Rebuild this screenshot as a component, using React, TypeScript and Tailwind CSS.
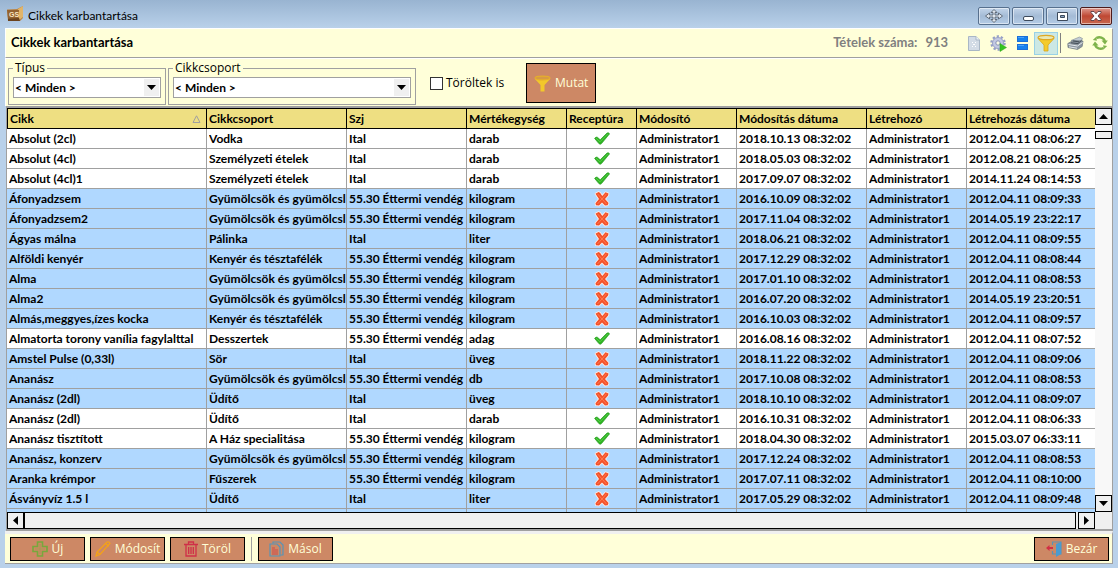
import { useState } from 'react';
import type { ReactNode } from 'react';

interface Item {
  name: string;
  group: string;
  szj: string;
  unit: string;
  recipe: boolean;
  modified: string;
  created: string;
}

const CATERING = '55.30 Éttermi vendég';
const FRUITS = 'Gyümölcsök és gyümölcsl';

const item = (name: string, group: string, szj: string, unit: string, recipe: boolean, modified: string, created: string): Item => ({
  name,
  group,
  szj,
  unit,
  recipe,
  modified: `${modified} 08:32:02`,
  created,
});

const ITEMS: Item[] = [
  item('Absolut (2cl)', 'Vodka', 'Ital', 'darab', true, '2018.10.13', '2012.04.11 08:06:27'),
  item('Absolut (4cl)', 'Személyzeti ételek', 'Ital', 'darab', true, '2018.05.03', '2012.08.21 08:06:25'),
  item('Absolut (4cl)1', 'Személyzeti ételek', 'Ital', 'darab', true, '2017.09.07', '2014.11.24 08:14:53'),
  item('Áfonyadzsem', FRUITS, CATERING, 'kilogram', false, '2016.10.09', '2012.04.11 08:09:33'),
  item('Áfonyadzsem2', FRUITS, CATERING, 'kilogram', false, '2017.11.04', '2014.05.19 23:22:17'),
  item('Ágyas málna', 'Pálinka', 'Ital', 'liter', false, '2018.06.21', '2012.04.11 08:09:55'),
  item('Alföldi kenyér', 'Kenyér és tésztafélék', CATERING, 'kilogram', false, '2017.12.29', '2012.04.11 08:08:44'),
  item('Alma', FRUITS, CATERING, 'kilogram', false, '2017.01.10', '2012.04.11 08:08:53'),
  item('Alma2', FRUITS, CATERING, 'kilogram', false, '2016.07.20', '2014.05.19 23:20:51'),
  item('Almás,meggyes,ízes kocka', 'Kenyér és tésztafélék', CATERING, 'kilogram', false, '2016.10.03', '2012.04.11 08:09:57'),
  item('Almatorta torony vanília fagylalttal', 'Desszertek', CATERING, 'adag', true, '2016.08.16', '2012.04.11 08:07:52'),
  item('Amstel Pulse (0,33l)', 'Sör', 'Ital', 'üveg', false, '2018.11.22', '2012.04.11 08:09:06'),
  item('Ananász', FRUITS, CATERING, 'db', false, '2017.10.08', '2012.04.11 08:08:53'),
  item('Ananász (2dl)', 'Üdítő', 'Ital', 'üveg', false, '2018.10.10', '2012.04.11 08:09:07'),
  item('Ananász (2dl)', 'Üdítő', 'Ital', 'darab', true, '2016.10.31', '2012.04.11 08:06:33'),
  item('Ananász tisztított', 'A Ház specialitása', CATERING, 'kilogram', true, '2018.04.30', '2015.03.07 06:33:11'),
  item('Ananász, konzerv', FRUITS, CATERING, 'kilogram', false, '2017.12.24', '2012.04.11 08:08:53'),
  item('Aranka krémpor', 'Fűszerek', CATERING, 'kilogram', false, '2017.07.11', '2012.04.11 08:10:00'),
  item('Ásványvíz 1.5 l', 'Üdítő', 'Ital', 'liter', false, '2017.05.29', '2012.04.11 08:09:48'),
];

const COLUMNS = [
  { label: 'Cikk', width: 'w-[200px]' },
  { label: 'Cikkcsoport', width: 'w-[140px]' },
  { label: 'Szj', width: 'w-[120px]' },
  { label: 'Mértékegység', width: 'w-[100px]' },
  { label: 'Receptúra', width: 'w-[70px]' },
  { label: 'Módosító', width: 'w-[100px]' },
  { label: 'Módosítás dátuma', width: 'w-[130px]' },
  { label: 'Létrehozó', width: 'w-[100px]' },
  { label: 'Létrehozás dátuma', width: '' },
];

function LogoIcon() {
  return (
    <svg width="16" height="16" viewBox="0 0 16 16">
      <path d="M0 3.500l10-.5 6-3v12l-3 3H1z" fill="#b98546" />
      <path d="M11 3l5-3v11l-4 3z" fill="#e0b46a" />
      <path d="M0 4h12l-.5 8L1 12.500z" fill="#94622f" />
      <path d="M1 12.500l11-.5 1 3H1z" fill="#6b431d" />
      <text x="2" y="10.500" fontSize="7" fontWeight="700" fontFamily="Liberation Sans, sans-serif" fill="#f8e6c2">GS</text>
    </svg>
  );
}

function FunnelIcon({ size = 18 }: { size?: number }) {
  return (
    <svg width={size} height={size} viewBox="0 0 18 18">
      <path d="M1 4.500L7 11v6h4v-6l6-6.500z" fill="#f4cb2b" stroke="#dba61a" strokeWidth=".8" />
      <ellipse cx="9" cy="3.500" rx="8" ry="2.200" fill="#e9e9b4" stroke="#dfa921" strokeWidth="1.200" />
    </svg>
  );
}

function SolidFunnelIcon() {
  return (
    <svg width="17" height="17" viewBox="0 0 17 17">
      <path d="M.5 3.500L6.500 10v6.500h4V10l6-6.500z" fill="#f2c82b" />
      <ellipse cx="8.500" cy="3" rx="7.500" ry="1.900" fill="#d79a45" stroke="#e5ae2b" strokeWidth="1.100" />
    </svg>
  );
}

function DocumentIcon() {
  return (
    <svg width="12" height="15" viewBox="0 0 12 15">
      <path d="M.5.500H8L11.500 4v10.500H.5z" fill="#d3dce6" stroke="#a9b7c6" />
      <path d="M8 .5V4h3.500" fill="#eef3f8" stroke="#a9b7c6" />
      <path d="M4 6h1v1H4zM7 6h1v1H7zM5 8h2v1H5zM4 10h1v1H4zM7 10h1v1H7z" fill="#fff" />
    </svg>
  );
}

function GearIcon() {
  return (
    <svg width="17" height="17" viewBox="0 0 17 17">
      <circle cx="8" cy="8" r="6.500" fill="none" stroke="#969fc6" strokeWidth="2.500" strokeDasharray="2.200 1.880" />
      <circle cx="8" cy="8" r="5.500" fill="#c3c9e3" stroke="#9aa2c8" />
      <circle cx="8" cy="8" r="2.200" fill="#f9fae4" stroke="#8790b8" />
      <path d="M10 8.500l6.500 4-6.500 4z" fill="#35c41f" stroke="#2aa317" strokeWidth=".5" />
    </svg>
  );
}

function PanesIcon() {
  return (
    <svg width="11" height="14" viewBox="0 0 11 14">
      <rect x=".5" y=".5" width="10" height="5" fill="#1682ee" stroke="#1b6fd6" />
      <rect x=".5" y="8.500" width="10" height="5" fill="#1682ee" stroke="#1b6fd6" />
      <path d="M1 1.500h6M1 9.500h6" stroke="#4ba4fa" />
    </svg>
  );
}

function PrinterIcon() {
  return (
    <svg width="17" height="15" viewBox="0 0 17 15">
      <path d="M4 4.500L12.500 1l3 1.500-2 4z" fill="#c3ccd3" stroke="#8b959e" strokeWidth=".7" />
      <path d="M.8 7.500L6 4.500l10 .5-.8 5.500-4.700 3L1 11.500z" fill="#8b959e" stroke="#6c7780" strokeWidth=".7" />
      <path d="M1.500 8.500l9 1.500 5-3.500" stroke="#e4e9ec" fill="none" />
      <path d="M2 10.800l8 1.400" stroke="#e4e9ec" fill="none" />
      <path d="M4 6.800l7 .8 3.500-3.300M6 5l6 .8" stroke="#454f58" fill="none" />
    </svg>
  );
}

function RefreshIcon() {
  return (
    <svg width="16" height="16" viewBox="0 0 16 16">
      <g fill="none" stroke="#7fb34b" strokeWidth="2.400">
        <path d="M4.500 3A6 6 0 0 1 13 6" />
        <path d="M11.500 13A6 6 0 0 1 3 10" />
      </g>
      <path d="M9.500 5.500h6.300L13 9.500zM6.500 10.500H.2L3 6.500z" fill="#7fb34b" />
      <path d="M4.500 1.500L.8 5l4 .8zM11.500 14.500l3.700-3.500-4-.8z" fill="#7fb34b" />
    </svg>
  );
}

function CheckIcon() {
  return (
    <svg width="16" height="13" viewBox="0 0 16 13" className="mx-auto" role="img" aria-label="igen">
      <path d="M.6 6.400q1.600-2 3-1l2.600 2.400L13 1q1.800-.6 2.600.8L7.500 11.600q-1.300 1.300-2.600 0z" fill="#2fb524" stroke="#2a9d22" strokeWidth=".7" strokeLinejoin="round" />
      <path d="M2 6.200l4 3.600 8-8" fill="none" stroke="#5fd150" strokeWidth=".8" />
    </svg>
  );
}

function CrossIcon() {
  return (
    <svg width="16" height="16" viewBox="0 0 16 16" className="mx-auto" role="img" aria-label="nem">
      <path
        d="M1.500 2.800L4.500 1l1.500.8L8.300 5l3.200-3.800 3 1.300-.4 2L11 8l3.500 4-.8 2.200-2.700.4L8 11.500l-3 3-3-.2-.5-2L5 8z"
        fill="#f4512a"
        stroke="#fbeee8"
        strokeWidth="1.600"
        strokeLinejoin="round"
        paintOrder="stroke"
      />
      <path d="M3.500 2.800l4.700 5.400 4.300 4.800M12.500 2.800L8 8l-4.500 5" stroke="#ff7b52" fill="none" />
    </svg>
  );
}

function PlusIcon() {
  return (
    <svg width="16" height="16" viewBox="0 0 16 16">
      <path d="M5.500 1h5v4.500H15v5h-4.500V15h-5v-4.500H1v-5h4.500z" fill="#cd8865" stroke="#77a83c" strokeWidth="1.600" />
      <path d="M8 3v10M3 8h10" stroke="#a99a52" strokeWidth="1.200" />
    </svg>
  );
}

function PencilIcon() {
  return (
    <svg width="16" height="16" viewBox="0 0 16 16" fill="none" stroke="#f5a316" strokeWidth="1.200">
      <path d="M1 15l1-4L12 1q2-.8 3 1.500L5 13.500z" />
      <path d="M2 11l3 2.500M10.500 2.500l3.200 2.800" />
    </svg>
  );
}

function TrashIcon() {
  return (
    <svg width="14" height="16" viewBox="0 0 14 16" fill="none" stroke="#cf2f48" strokeWidth="1.300">
      <path d="M0 3.500h14M4.500 3V1h5v2M2 4v11h10V4M4.700 6v7M7 6v7M9.300 6v7" />
    </svg>
  );
}

function CopyIcon() {
  return (
    <svg width="15" height="16" viewBox="0 0 15 16" fill="none" stroke="#5794b8" strokeWidth="1.200">
      <path d="M4 2.500V1h7l3 3v10h-2.500" />
      <path d="M1 3h7l3 3v9H1z" />
      <path d="M3 7h3M3 9h6M3 11h6M3 13h6" stroke="#cf4a4a" />
    </svg>
  );
}

function ExitIcon() {
  return (
    <svg width="16" height="16" viewBox="0 0 16 16">
      <path d="M6.500 4V1H15v12h-4M6.500 10v3H10" fill="none" stroke="#5b93b4" strokeWidth="1.200" />
      <path d="M10 3l5-2v12l-5 3z" fill="#4a9bd0" />
      <path d="M0 7l3.500-3v2H7v2H3.500v2z" fill="#d22f45" />
    </svg>
  );
}

interface WindowButtonProps {
  label: string;
  children: ReactNode;
  close?: boolean;
}

function WindowButton({ label, children, close = false }: WindowButtonProps) {
  const tone = close
    ? 'border-[#4d1b1b] bg-linear-to-b from-[#dd9a90] via-[#bf4733] to-[#c8684f]'
    : 'border-[#57708e] bg-linear-to-b from-[#c3d5ea] via-[#a4bbd6] to-[#b4cce6]';
  return (
    <button type="button" aria-label={label} className={`flex h-[18px] w-8 items-center justify-center rounded-xs border inset-ring inset-ring-white/50 ${tone}`}>
      {children}
    </button>
  );
}

interface ActionButtonProps {
  icon: ReactNode;
  children: ReactNode;
  className?: string;
}

function ActionButton({ icon, children, className = 'h-6 w-[75px]' }: ActionButtonProps) {
  return (
    <button type="button" className={`flex items-center justify-center gap-1 border border-black bg-[#cd8865] font-['Open_Sans',sans-serif] text-[12px] text-[#ffffd8] ${className}`}>
      {icon}
      {children}
    </button>
  );
}

function FilterSelect({ label, id, className }: { label: string; id: string; className: string }) {
  return (
    <fieldset className={`h-[43px] border border-[#a0a0a0] px-1 ${className}`}>
      <legend className="px-0.5 font-['Open_Sans',sans-serif] text-[12px] leading-3">
        <label htmlFor={id}>{label}</label>
      </legend>
      <div className="relative mt-[3px]">
        <select id={id} className="h-[21px] w-full appearance-none border border-[#a0a0a0] bg-white px-px text-[12px] leading-4 font-bold">
          <option>&lt; Minden &gt;</option>
        </select>
        <span className="pointer-events-none absolute inset-y-0.5 right-0.5 flex w-[15px] items-center justify-center bg-[#f0f0f0]">
          <svg width="9" height="5" viewBox="0 0 9 5"><path d="M0 0h9L4.500 5z" /></svg>
        </span>
      </div>
    </fieldset>
  );
}

function ScrollButton({ label, path }: { label: string; path: string }) {
  return (
    <button type="button" aria-label={label} className="flex size-[17px] shrink-0 items-center justify-center border border-black bg-[#f0f0f0]">
      <svg width="9" height="9" viewBox="0 0 9 9"><path d={path} /></svg>
    </button>
  );
}

function Row({ data }: { data: Item }) {
  const texts = [data.name, data.group, data.szj, data.unit];
  const cell = 'h-5 border-r border-b border-[#a0a0a0] p-0';
  const text = 'ml-0.5 overflow-hidden leading-[19px] whitespace-nowrap';
  return (
    <tr className={data.recipe ? 'bg-white' : 'bg-[#b0d8ff]'}>
      {texts.map((value, i) => (
        <td key={i} className={cell}><div className={text}>{value}</div></td>
      ))}
      <td className={cell}>{data.recipe ? <CheckIcon /> : <CrossIcon />}</td>
      <td className={cell}><div className={text}>Administrator1</div></td>
      <td className={cell}><div className={text}>{data.modified}</div></td>
      <td className={cell}><div className={text}>Administrator1</div></td>
      <td className="h-5 border-b border-[#a0a0a0] p-0"><div className={text}>{data.created}</div></td>
    </tr>
  );
}

export default function App() {
  const [showDeleted, setShowDeleted] = useState(false);

  return (
    <div className="flex h-screen flex-col overflow-hidden bg-[#b9d1ea] px-[5px] pb-1 font-['Lato',sans-serif] text-[12px] text-black">
      <header className="-mx-[5px] flex h-7 shrink-0 items-center gap-[5px] bg-linear-to-b from-[#99b4d1] to-[#b9d1ea] pr-1.5 pl-[7px]">
        <LogoIcon />
        <span className="mt-1 flex-1">Cikkek karbantartása</span>
        <div className="mt-1 flex gap-0.5">
          <WindowButton label="Mozgatás">
            <svg width="18" height="14" viewBox="0 0 18 14">
              <path d="M9 .5l3 3h-2v2.500h3.500V4l4 3-4 3V8H10v2.500h2l-3 3-3-3h2V8H4.500v2l-4-3 4-3v2H8V3.500H6z" fill="#dfe6ee" stroke="#5a6472" strokeWidth=".9" />
            </svg>
          </WindowButton>
          <WindowButton label="Kis méret">
            <span className="mt-1 h-[5px] w-[11px] rounded-xs border border-[#3d4a5c] bg-white" />
          </WindowButton>
          <WindowButton label="Teljes méret">
            <svg width="11" height="9" viewBox="0 0 11 9">
              <path d="M.5.500h10v8H.5z" fill="#fff" stroke="#3d4a5c" />
              <path d="M3.500 3.500h4v2h-4z" fill="#8ba4c2" stroke="#3d4a5c" />
            </svg>
          </WindowButton>
          <WindowButton label="Bezárás" close>
            <svg width="12" height="10" viewBox="0 0 12 10">
              <path d="M1 .5h3l2 2.300L8 .5h3v1L8 5l3 3.500v1H8L6 7.200 4 9.500H1v-1L4 5 1 1.500z" fill="#fff" stroke="#4a3038" strokeWidth=".8" />
            </svg>
          </WindowButton>
        </div>
      </header>

      <div className="flex h-[30px] shrink-0 items-center border-t border-r border-l border-b border-[#a0a0a0] border-t-white border-l-white bg-[#ffffd9] pr-1 pl-[5px]">
        <h1 className="flex-1 text-[13px] font-bold">Cikkek karbantartása</h1>
        <span className="mr-5 flex gap-2 text-[13px] font-bold text-[#808080]">
          <span>Tételek száma:</span>
          <span>913</span>
        </span>
        <div className="flex items-center">
          <button type="button" aria-label="Új dokumentum" className="mr-2.5"><DocumentIcon /></button>
          <button type="button" aria-label="Műveletek" className="mr-2.5"><GearIcon /></button>
          <button type="button" aria-label="Nézet" className="mr-1.5"><PanesIcon /></button>
          <button type="button" aria-label="Szűrő" aria-pressed="true" className="flex h-[23px] w-6 items-center justify-center border border-[#99d1e6] bg-[#cce8e4]"><FunnelIcon /></button>
          <span className="mx-0.5 h-5 w-px bg-[#808080]" />
          <button type="button" aria-label="Nyomtatás" className="mr-2 ml-1"><PrinterIcon /></button>
          <button type="button" aria-label="Frissítés"><RefreshIcon /></button>
        </div>
      </div>

      <div className="flex h-12 shrink-0 items-start border-t border-r border-l border-white border-r-[#a0a0a0] bg-[#ffffd9] pl-0.5">
        <FilterSelect label="Típus" id="type" className="mt-[3px] w-[158px]" />
        <FilterSelect label="Cikkcsoport" id="group" className="mt-[3px] ml-0.5 w-[248px]" />
        <label className="mt-4 ml-3.5 flex items-center gap-[3px] font-['Open_Sans',sans-serif] text-[12px] leading-4">
          <input
            type="checkbox"
            checked={showDeleted}
            onChange={(e) => setShowDeleted(e.target.checked)}
            className="size-[13px] appearance-none border border-[#333] bg-white checked:bg-[#333]"
          />
          Töröltek is
        </label>
        <ActionButton icon={<SolidFunnelIcon />} className="mt-1 ml-[22px] h-10 w-[70px]">Mutat</ActionButton>
      </div>

      <main className="ml-px flex min-h-0 flex-1 flex-col border border-y-2 border-[#a0a0a0] bg-[#f0f0f0]">
        <div className="flex min-h-0 flex-1">
          <div className="min-w-0 flex-1 overflow-hidden">
            <table className="w-full table-fixed border-separate border-spacing-0 text-left font-bold">
              <thead>
                <tr className="bg-[#eedf82]">
                  {COLUMNS.map((col, i) => (
                    <th key={col.label} className={`h-[21px] border-y border-r border-black p-0 first:border-l last:border-r-0 ${col.width}`}>
                      <div className="flex items-center justify-between overflow-hidden pr-[5px] pl-0.5 leading-[19px] whitespace-nowrap">
                        {col.label}
                        {i === 0 && (
                          <svg width="9" height="8" viewBox="0 0 9 8" fill="none" stroke="#a0a0a0"><path d="M1 7.500L4.500.8 8 7.500z" /></svg>
                        )}
                      </div>
                    </th>
                  ))}
                </tr>
              </thead>
              <tbody>
                {ITEMS.map((data, i) => <Row key={i} data={data} />)}
                <tr className="bg-[#b0d8ff]">
                  {COLUMNS.map((col) => <td key={col.label} className="h-5 border-r border-[#a0a0a0] p-0 last:border-r-0" />)}
                </tr>
              </tbody>
            </table>
          </div>
          <div className="flex flex-col bg-[#f8f8f8]">
            <ScrollButton label="Fel" path="M0 7l4.500-5L9 7z" />
            <div className="flex-1 pt-1.5">
              <div className="h-2 border border-black bg-[#f0f0f0]" />
            </div>
            <ScrollButton label="Le" path="M0 2h9L4.500 7z" />
          </div>
        </div>
        <div className="flex shrink-0 gap-0.5 pr-[17px]">
          <div className="flex flex-1">
            <ScrollButton label="Balra" path="M7 0v9L2 4.500z" />
            <div className="flex-1 border border-black bg-[#f0f0f0]" />
          </div>
          <ScrollButton label="Jobbra" path="M2 0v9l5-4.500z" />
        </div>
      </main>

      <footer className="flex h-[33px] shrink-0 items-center gap-[5px] border-t-3 border-r border-b border-[#a0a0a0] border-t-[#f0f0f0] bg-[#ffffd9] pr-[3px] pl-[5px]">
        <ActionButton icon={<PlusIcon />}>Új</ActionButton>
        <ActionButton icon={<PencilIcon />}>Módosít</ActionButton>
        <ActionButton icon={<TrashIcon />}>Töröl</ActionButton>
        <span className="mx-px h-6 w-px bg-[#a0a0a0]" />
        <ActionButton icon={<CopyIcon />}>Másol</ActionButton>
        <div className="flex-1" />
        <ActionButton icon={<ExitIcon />}>Bezár</ActionButton>
      </footer>
    </div>
  );
}
